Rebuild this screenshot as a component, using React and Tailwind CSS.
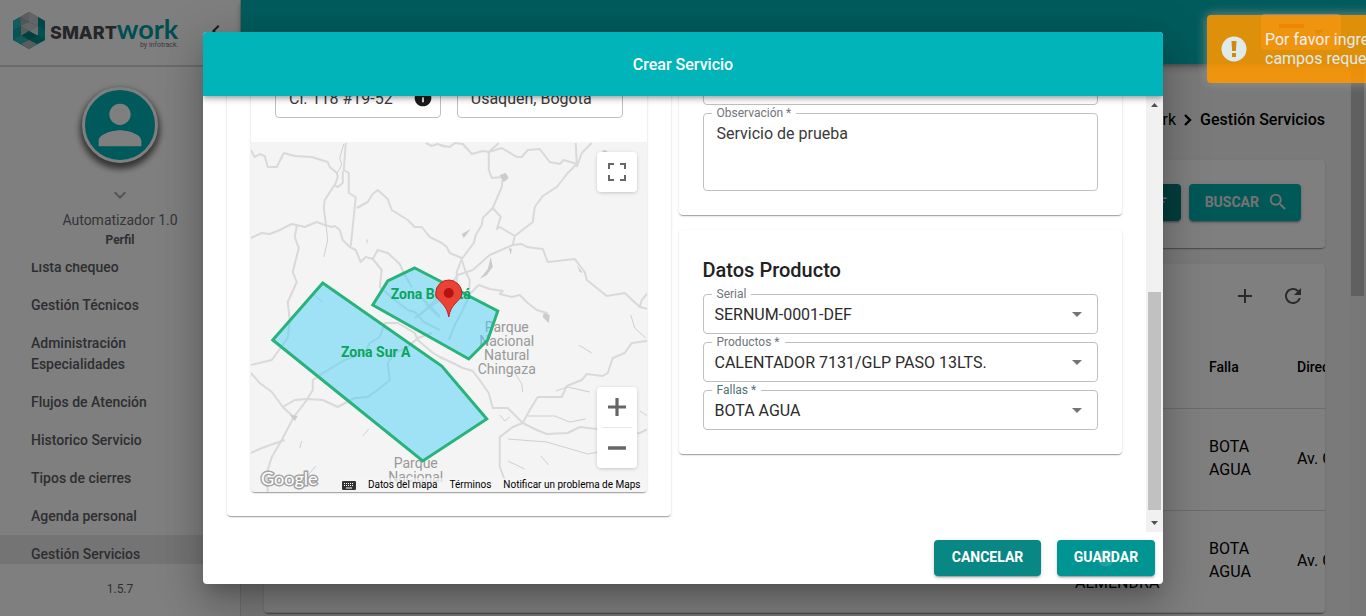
import React from "react";

const ROADS = [
  "251,150 255,157 260,154 265,156 268,167 277,167 284,153 295,156 312,157 328,162 330,167 337,173 338,177 336,183 325,200 324,208 326,223",
  "346,143 344,170 349,173 349,193 356,197 354,217 351,246",
  "343,171 343,183 338,187 334,185",
  "357,208 368,202 373,194 378,190 388,199 392,210 408,220 415,227 422,227 430,237 442,243 447,247 450,253 462,258",
  "251,238 262,233 270,234 280,230 292,224 305,227 317,222 325,225 332,227 335,226 340,230 343,240 350,247 356,250 361,262 366,257 373,259 378,250 388,253 400,264 405,275 412,287",
  "297,226 295,237 299,248 293,272 297,282 288,302 290,320 288,338 272,360 251,365",
  "373,259 382,270 380,287 395,300 408,310 415,312 424,322 440,330",
  "415,318 440,300",
  "420,296 440,316",
  "440,145 450,147 455,143 463,144 472,154 483,151 489,152 499,143",
  "426,143 432,146 438,144 446,147",
  "489,152 502,148 517,157 522,157 528,150 540,149 550,162 560,164 564,160 577,164",
  "576,143 577,164 568,173 557,187 543,196 535,207 533,222 515,236 513,245 490,255 473,270 458,275 453,282 440,296 420,315",
  "592,143 582,153 577,167",
  "489,152 489,170 492,178 503,177 502,187 493,208 483,218 482,225 476,235 474,243 462,259 457,272 457,290",
  "493,208 501,217 497,229 500,227 515,236",
  "513,245 522,244 527,247 543,249 548,262 575,259 585,272 587,280 607,296 625,293 640,307 648,309",
  "640,307 642,300 648,293",
  "470,294 479,285 490,289 503,291 500,294 512,297 520,295 528,303 537,310 547,313 548,320",
  "462,260 466,272 470,280 469,297 462,312 455,325 449,340",
  "251,373 260,383 272,392 278,400 283,407 294,417 282,440 272,457 267,473 268,492",
  "294,417 307,400 313,390 313,380 325,372 345,360 365,353 370,343 380,337 385,323 398,323 415,333 418,340 432,352 440,357 453,363 463,368 473,371 482,383 489,393 493,408 508,408 523,423 537,430 547,434 568,433 580,427 597,429 627,434 640,433 648,429",
  "283,407 295,400 307,399 323,400 338,407 355,398 368,397 378,390 390,380 388,363 395,353 408,347 418,338 432,333",
  "251,453 262,448 285,440",
  "648,341 632,343 625,353 613,358 608,373 603,376 587,374 582,380 567,386 562,397 538,397 530,410 523,423 513,427 500,437 500,467 505,480",
];

const STREAMS = [
  "344,144 340,158 342,165 337,174",
  "326,223 328,240 324,257",
  "528,416 555,416 570,422 586,419",
  "508,439 547,442 588,454 605,451",
  "508,461 525,469",
  "541,456 549,465",
  "556,391 568,387 590,392",
  "579,345 592,353",
  "516,374 522,384 523,392",
  "631,315 635,328 646,338",
  "500,415 505,421 510,417",
  "640,411 648,416",
  "363,436 369,429",
  "300,448 302,441",
  "307,477 316,466",
  "312,293 323,302",
  "425,304 440,318",
];

const NAV = [
  "Lista chequeo",
  "Gestión Técnicos",
  "Administración Especialidades",
  "Flujos de Atención",
  "Historico Servicio",
  "Tipos de cierres",
  "Agenda personal",
  "Gestión Servicios",
];

const CARD =
  "rounded bg-white shadow-[0_2px_1px_-1px_rgba(0,0,0,0.2),0_1px_1px_0_rgba(0,0,0,0.14),0_1px_3px_0_rgba(0,0,0,0.12)]";
const RAISED =
  "shadow-[0_3px_1px_-2px_rgba(0,0,0,0.2),0_2px_2px_0_rgba(0,0,0,0.14),0_1px_5px_0_rgba(0,0,0,0.12)]";

function Logo() {
  return (
    <div className="flex items-center gap-1">
      <svg width="34" height="37" viewBox="0 0 34 37" aria-hidden="true">
        <polygon points="17,0 33,9 33,28 17,37 1,28 1,9" fill="#00a2a6" />
        <polygon points="17,0 26,5 17,10 8,5" fill="#b9bbbe" />
        <polygon points="17,0 26,5 26,14 17,10" fill="#c6c8ca" />
        <polygon points="8,5 17,10 9,15 8,14" fill="#a9abae" />
        <polygon points="1,9 8,5 9,14 1,18" fill="#2bb4b8" />
        <polygon points="1,18 9,14 9,23 1,28" fill="#0fa7ab" />
        <polygon points="26,5 33,9 33,18 26,14" fill="#008e90" />
        <polygon points="26,14 33,18 33,28 26,23" fill="#00a4a6" />
        <polygon points="9,14 17,10 26,14 17,19" fill="#c9cbcd" />
        <polygon points="9,14 17,19 9,24" fill="#b3b6b9" />
        <polygon points="26,14 26,24 17,19" fill="#d8dadb" />
        <polygon points="9,24 17,19 26,24 17,28" fill="#007f7c" />
        <polygon points="1,28 9,23 17,28 9,32" fill="#2ab3b6" />
        <polygon points="17,28 26,23 33,28 25,32" fill="#008c88" />
        <polygon points="9,32 17,28 25,32 17,37" fill="#b4b6b9" />
      </svg>
      <div className="relative flex items-baseline leading-7">
        <span className="font-[Inter,sans-serif] text-lg font-extrabold text-[#4c4d52]">SMART</span>
        <span className="font-[Lato,sans-serif] text-[27px] font-bold text-[#009fa0]">work</span>
        <span className="absolute -bottom-1 right-0 text-[7px] leading-3 text-[#77787c]">by infotrack.</span>
      </div>
    </div>
  );
}

function Sidebar() {
  return (
    <aside className="flex w-[241px] shrink-0 flex-col border-r border-[#dcdcdc] bg-white">
      <div className="flex h-[67px] shrink-0 items-center justify-between border-b-2 border-[#d6d6d6] pb-1 pl-3 pr-3">
        <Logo />
        <button type="button" aria-label="Contraer menú" className="text-[#333]">
          <svg width="24" height="24" viewBox="0 0 24 24" fill="currentColor">
            <path d="M15.41 7.41 14 6l-6 6 6 6 1.41-1.41L10.83 12z" />
          </svg>
        </button>
      </div>
      <div className="flex h-[196px] shrink-0 flex-col items-center pt-5">
        <div className="flex size-[76px] items-center justify-center rounded-full border-[3px] border-white bg-[#00b4b6] shadow-[0_4px_6px_2px_rgba(0,0,0,0.6)]">
          <svg width="64" height="64" viewBox="0 0 24 24" fill="#fff" aria-hidden="true">
            <path d="M12 12c2.21 0 4-1.79 4-4s-1.79-4-4-4-4 1.79-4 4 1.79 4 4 4zm0 2c-2.67 0-8 1.34-8 4v2h16v-2c0-2.66-5.33-4-8-4z" />
          </svg>
        </div>
        <svg className="mt-5" width="24" height="24" viewBox="0 0 24 24" fill="#a8a8a8" aria-hidden="true">
          <path d="M7.41 8.59 12 13.17l4.59-4.58L18 10l-6 6-6-6z" />
        </svg>
        <p className="mt-[3px] text-sm leading-5 text-[#6a6b72]">Automatizador 1.0</p>
        <p className="mt-0.5 text-xs font-bold leading-4 text-[#5f6068]">Perfil</p>
      </div>
      <nav className="min-h-0 flex-1 overflow-hidden">
        <ul className="-mt-[15px]">
          {NAV.map((item) => (
            <li key={item}>
              <a
                href="#"
                className={
                  "block pb-2 pl-[31px] pr-20 pt-[9px] text-sm font-medium leading-[21px] text-[#5c5d64] " +
                  (item === "Gestión Servicios" ? "bg-[#e9e9e9]" : "")
                }
              >
                {item}
              </a>
            </li>
          ))}
        </ul>
      </nav>
      <p className="flex h-[52px] shrink-0 items-center justify-center pb-0.5 text-xs text-[#5f6068]">1.5.7</p>
    </aside>
  );
}

function ServicesTable() {
  const cell = "border-b border-[#d8d8d8] px-4 text-left";
  return (
    <table className="w-[1200px] table-fixed border-collapse">
      <thead>
        <tr className="h-20 text-sm font-medium">
          <th className={cell + " w-[795px]"}></th>
          <th className={cell + " w-[134px]"}></th>
          <th className={cell + " w-[88px] pb-0.5 font-medium"}>Falla</th>
          <th className={cell + " pb-0.5 font-medium"}>Dirección</th>
        </tr>
      </thead>
      <tbody>
        {[0, 1].map((row) => (
          <tr key={row} className="h-[102px] text-base leading-[23px]">
            <td className={cell}></td>
            <td className={cell + " pb-[18px] align-bottom"}>ALMENDRA</td>
            <td className={cell + " pb-0.5"}>BOTA AGUA</td>
            <td className={cell + " pb-0.5"}>Av. Calle</td>
          </tr>
        ))}
      </tbody>
    </table>
  );
}

function Backdrop() {
  return (
    <div className="flex h-full">
      <Sidebar />
      <div className="flex min-w-0 flex-1 flex-col bg-[#f5f5f5] text-black">
        <header className="z-10 flex h-16 shrink-0 items-center justify-end bg-[#00b7b8] pr-[25px] shadow-[0_2px_4px_-1px_rgba(0,0,0,0.3),0_4px_8px_0_rgba(0,0,0,0.2)]">
          <button type="button" aria-label="Idioma" className="flex h-9 w-20 items-center justify-center gap-2.5 rounded bg-white">
            <span className="flex h-4 w-[25px] flex-col">
              <span className="h-1 bg-[#e02020]"></span>
            </span>
            <svg width="10" height="5" viewBox="0 0 10 5" aria-hidden="true">
              <path d="M0 0h10L5 5z" fill="#555" />
            </svg>
          </button>
        </header>
        <div className="flex min-h-0 flex-1">
          <main className="min-w-0 flex-1 overflow-hidden px-6 pl-[23px]">
            <div className="flex h-24 items-center justify-end gap-1 pt-4 text-base">
              <span>Smartwork</span>
              <svg width="16" height="16" viewBox="0 0 16 16" fill="none" stroke="#000" strokeWidth="2.4" aria-hidden="true">
                <path d="M5 3l5 5-5 5" />
              </svg>
              <span className="font-medium">Gestión Servicios</span>
            </div>
            <section className={CARD + " flex h-[88px] items-start justify-end gap-2 p-6"}>
              <button type="button" className={RAISED + " flex h-[37px] items-center gap-2 rounded bg-[#067e7c] px-3 pb-0.5 text-sm font-bold text-[#e6e6e6]"}>
                FILTRAR
                <svg width="18" height="18" viewBox="0 0 24 24" fill="currentColor" aria-hidden="true">
                  <path d="M3 6h18v2H3zM6 11h12v2H6zM10 16h6v2h-6z" />
                </svg>
              </button>
              <button type="button" className={RAISED + " flex h-[37px] w-28 items-center justify-end gap-2 rounded bg-[#00b0ae] pb-0.5 pr-3 text-sm font-bold text-[#e6e6e6]"}>
                BUSCAR
                <svg width="22" height="22" viewBox="0 0 24 24" fill="currentColor" aria-hidden="true">
                  <path d="M15.5 14h-.79l-.28-.27A6.471 6.471 0 0 0 16 9.5 6.5 6.5 0 1 0 9.5 16c1.61 0 3.09-.59 4.23-1.57l.27.28v.79l5 4.99L20.49 19l-4.99-5zm-6 0C7.01 14 5 11.99 5 9.5S7.01 5 9.5 5 14 7.01 14 9.5 11.99 14 9.5 14z" />
                </svg>
              </button>
            </section>
            <section className={CARD + " mt-4 overflow-hidden"}>
              <div className="flex h-16 items-center justify-end pr-2 text-[#555]">
                <button type="button" aria-label="Agregar" className="flex size-12 items-center justify-center">
                  <svg width="24" height="24" viewBox="0 0 24 24" fill="currentColor">
                    <path d="M19 13h-6v6h-2v-6H5v-2h6V5h2v6h6v2z" />
                  </svg>
                </button>
                <button type="button" aria-label="Actualizar" className="flex size-12 items-center justify-center">
                  <svg width="24" height="24" viewBox="0 0 24 24" fill="currentColor">
                    <path d="M17.65 6.35A7.958 7.958 0 0 0 12 4c-4.42 0-7.99 3.58-7.99 8s3.57 8 7.99 8c3.73 0 6.84-2.55 7.73-6h-2.08A5.99 5.99 0 0 1 12 18c-3.31 0-6-2.69-6-6s2.69-6 6-6c1.66 0 3.14.69 4.22 1.78L13 11h7V4l-2.35 2.35z" />
                  </svg>
                </button>
              </div>
              <ServicesTable />
            </section>
          </main>
          <div className="flex w-[17px] justify-center bg-[#f1f1f1]">
            <div className="h-[232px] w-[13px] bg-[#c1c1c1]"></div>
          </div>
        </div>
      </div>
    </div>
  );
}

function Field({ label, id, tone = "text-[#70757a]", children }) {
  return (
    <div className="relative">
      {label && (
        <label
          htmlFor={id}
          className={"absolute -top-2 left-[9px] z-[1] bg-white px-[5px] text-xs leading-4 " + tone}
        >
          {label}
        </label>
      )}
      {children}
    </div>
  );
}

function SelectField({ id, label, value, tone }) {
  return (
    <Field id={id} label={label} tone={tone}>
      <select
        id={id}
        defaultValue={value}
        className="block h-10 w-full appearance-none rounded border border-[#c0c0c0] bg-white pl-[11px] pr-10 pt-0.5 text-base text-[#2b2b2b]"
      >
        <option value={value}>{value}</option>
      </select>
      <svg className="pointer-events-none absolute right-4 top-[18px]" width="10" height="5" viewBox="0 0 10 5" aria-hidden="true">
        <path d="M0 0h10L5 5z" fill="#757575" />
      </svg>
    </Field>
  );
}

function ZoneMap() {
  return (
    <div className="relative h-[350px] overflow-hidden rounded-b bg-[#f4f4f4]">
      <svg
        className="block size-full"
        viewBox="250 142 398 350"
        preserveAspectRatio="xMidYMid slice"
        fontFamily="Roboto, sans-serif"
        textAnchor="middle"
      >
        <g fill="none" stroke="#d9d9d9" strokeWidth="2" strokeLinejoin="round">
          {ROADS.map((p) => (
            <polyline key={p} points={p} />
          ))}
        </g>
        <g fill="none" stroke="#cfcfcf" strokeWidth="1">
          {STREAMS.map((p) => (
            <polyline key={p} points={p} />
          ))}
        </g>
        <g fill="#cbcbcb">
          <path d="M500 175l6-2 3 5-5 4zM462 234l9-5-7 9zM491 257l2 10-6 8-7 4 8-10zM509 248l3 1-1 6zM577 265l6 8-3-1zM544 313l6 2-1 8-6-6zM367 238l1 3-1 4zM290 415l8 1-3 5zM603 150l5 1-5 3z" />
        </g>
        <g fill="#999" fontSize="14">
          <text x="507" y="332">Parque</text>
          <text x="507" y="346">Nacional</text>
          <text x="507" y="360">Natural</text>
          <text x="507" y="374">Chingaza</text>
          <text x="416" y="468">Parque</text>
          <text x="416" y="482">Nacional</text>
        </g>
        <g fill="#4cd0f6" fillOpacity="0.5" stroke="#28b37a" strokeWidth="3">
          <polygon points="415,268 498,311 488,340 469,359 373,305 388,281" />
          <polygon points="323,283 442,366 487,419 423,461 273,340" />
        </g>
        <g fill="#0aa45c" fontSize="14" fontWeight="700">
          <text x="431" y="299">Zona Bogotá</text>
          <text x="376" y="357">Zona Sur A</text>
        </g>
        <path
          d="M449 317c-1-6-3-10-7-14-4-4-6-6-6-10a13 13 0 0 1 26 0c0 4-2 6-6 10-4 4-6 8-7 14z"
          fill="#ea4335"
          stroke="#c5221f"
          strokeWidth="1"
        />
        <circle cx="449" cy="293" r="5" fill="#b31412" />
      </svg>
      <span className="absolute bottom-0 left-2.5 font-[Lato,sans-serif] text-lg leading-7 text-white [-webkit-text-stroke:3px_#a3a3a3] [paint-order:stroke_fill]">
        Google
      </span>
      <div className="absolute bottom-0 right-0 flex h-[14px] items-center gap-3 bg-[#f5f5f5]/70 pr-1.5 text-[10px] leading-[14px] text-black">
        <svg width="14" height="9" viewBox="0 0 14 9" aria-hidden="true">
          <rect width="14" height="9" rx="1" fill="#333" />
          <path d="M2 2.5h10M2 4.5h10" stroke="#fff" strokeDasharray="1 1" />
          <path d="M4 7h6" stroke="#fff" />
        </svg>
        <a href="#">Datos del mapa</a>
        <a href="#">Términos</a>
        <a href="#">Notificar un problema de Maps</a>
      </div>
      <button
        type="button"
        aria-label="Pantalla completa"
        className="absolute right-2.5 top-2.5 flex size-10 items-center justify-center rounded-sm bg-white shadow-[0_1px_4px_-1px_rgba(0,0,0,0.3)]"
      >
        <svg width="18" height="18" viewBox="0 0 18 18" fill="#666">
          <path d="M0 0v6h2V2h4V0H0zm16 0h-4v2h4v4h2V0h-2zm0 16h-4v2h6v-6h-2v4zM2 12H0v6h6v-2H2v-4z" />
        </svg>
      </button>
      <div className="absolute bottom-6 right-2.5 flex w-10 flex-col items-center rounded-sm bg-white shadow-[0_1px_4px_-1px_rgba(0,0,0,0.3)]">
        <button type="button" aria-label="Acercar" className="flex size-10 items-center justify-center">
          <svg width="18" height="18" viewBox="0 0 18 18" fill="#666">
            <path d="M18 7.4v3.2h-7.4V18H7.4v-7.4H0V7.4h7.4V0h3.2v7.4z" />
          </svg>
        </button>
        <div className="h-px w-[30px] bg-[#e6e6e6]"></div>
        <button type="button" aria-label="Alejar" className="flex size-10 items-center justify-center">
          <svg width="18" height="18" viewBox="0 0 18 18" fill="#666">
            <path d="M0 7.2h18v3.6H0z" />
          </svg>
        </button>
      </div>
    </div>
  );
}

function DialogScrollbar() {
  return (
    <div className="flex w-[17px] shrink-0 flex-col items-center justify-between bg-[#f1f1f1] py-[7px]" aria-hidden="true">
      <svg width="7" height="4" viewBox="0 0 7 4">
        <path d="M0 4h7L3.500 0z" fill="#505050" />
      </svg>
      <div className="flex min-h-0 w-[13px] flex-1 flex-col justify-end pb-[11px]">
        <div className="h-[54%] bg-[#c1c1c1]"></div>
      </div>
      <svg width="7" height="4" viewBox="0 0 7 4">
        <path d="M0 0h7L3.500 4z" fill="#505050" />
      </svg>
    </div>
  );
}

function CreateServiceDialog() {
  const box = "block w-full rounded border border-[#c0c0c0] bg-white text-base text-[#3a3a3a]";
  return (
    <div
      role="dialog"
      aria-label="Crear Servicio"
      className="flex h-full w-full max-w-[960px] flex-col overflow-hidden rounded bg-white shadow-[0_11px_15px_-7px_rgba(0,0,0,0.2),0_24px_38px_3px_rgba(0,0,0,0.14),0_9px_46px_8px_rgba(0,0,0,0.12)]"
    >
      <header className="z-10 flex h-16 shrink-0 items-center justify-center bg-[#00b4b9] pt-0.5 shadow-[0_2px_4px_-1px_rgba(0,0,0,0.2),0_4px_5px_0_rgba(0,0,0,0.14),0_1px_10px_0_rgba(0,0,0,0.12)]">
        <h2 className="text-base font-medium text-white">Crear Servicio</h2>
      </header>
      <div className="flex min-h-0 flex-1">
        <div className="flex min-w-0 flex-1 flex-col justify-end overflow-hidden px-6 pb-4">
          <div className="grid grid-cols-2 items-start gap-2">
            <section className={CARD + " p-6"}>
              <div className={CARD}>
                <div className="grid grid-cols-2 gap-4 p-6">
                  <div className="relative">
                    <input aria-label="Dirección" defaultValue="Cl. 118 #19-52" className={box + " h-10 pl-[13px] pr-8"} />
                    <svg className="absolute right-2 top-2.5" width="20" height="20" viewBox="0 0 24 24" fill="#1c1c1c" aria-hidden="true">
                      <path d="M12 2C6.48 2 2 6.480 2 12s4.480 10 10 10 10-4.480 10-10S17.520 2 12 2zm1 15h-2v-6h2v6zm0-8h-2V7h2v2z" />
                    </svg>
                  </div>
                  <input aria-label="Ciudad" defaultValue="Usaquén, Bogotá" className={box + " h-10 px-[13px]"} />
                </div>
                <ZoneMap />
              </div>
            </section>
            <div className="flex flex-col gap-[15px]">
              <section className={CARD + " flex h-[185px] flex-col justify-end gap-2 p-6"}>
                <input aria-label="Detalle" className={box + " h-10 shrink-0 px-3"} />
                <Field id="observacion" label="Observación *">
                  <textarea id="observacion" defaultValue="Servicio de prueba" className={box + " h-[78px] resize-none px-[13px] py-2 leading-6"} />
                </Field>
              </section>
              <section className={CARD + " p-6"}>
                <h3 className="mb-2 text-xl font-medium leading-8 text-[#212121]">Datos Producto</h3>
                <div className="flex flex-col gap-2">
                  <SelectField id="serial" label="Serial" value="SERNUM-0001-DEF" />
                  <SelectField id="productos" label="Productos *" value="CALENTADOR 7131/GLP PASO 13LTS." />
                  <SelectField id="fallas" label="Fallas *" value="BOTA AGUA" tone="text-[#4f7376]" />
                </div>
              </section>
            </div>
          </div>
        </div>
        <DialogScrollbar />
      </div>
      <footer className="flex shrink-0 justify-end gap-4 p-2">
        <button type="button" className={RAISED + " h-9 min-w-[107px] rounded bg-[#088784] px-4 pb-0.5 text-sm font-bold text-white"}>
          CANCELAR
        </button>
        <button
          type="button"
          className={RAISED + " h-9 min-w-[98px] rounded bg-[#009492] bg-[radial-gradient(circle,rgba(255,255,255,0.12)_8px,transparent_9px)] px-3 pb-0.5 text-sm font-bold text-white"}
        >
          GUARDAR
        </button>
      </footer>
    </div>
  );
}

function Toast() {
  return (
    <div
      role="alert"
      className="absolute -right-[141px] top-[15px] z-30 flex h-[68px] w-[300px] items-center gap-[18px] rounded-sm bg-[#ff9800] pl-[14px] text-base leading-[19px] text-white opacity-[0.875] shadow-[0_0_12px_#999]"
    >
      <svg className="shrink-0" width="26" height="26" viewBox="0 0 26 26" aria-hidden="true">
        <circle cx="13" cy="13" r="12.500" fill="#fff" />
        <path d="M10.500 5h5l-.6 10h-3.800zM11 17h4v4h-4z" fill="#f09000" />
      </svg>
      <p>
        Por favor ingrese los
        <br />
        campos requeridos
      </p>
    </div>
  );
}

export default function App() {
  return (
    <div className="relative h-screen overflow-hidden bg-white font-[Roboto,sans-serif]">
      <Backdrop />
      <div className="absolute inset-0 z-20 flex justify-center bg-black/50 py-8">
        <CreateServiceDialog />
      </div>
      <Toast />
    </div>
  );
}
